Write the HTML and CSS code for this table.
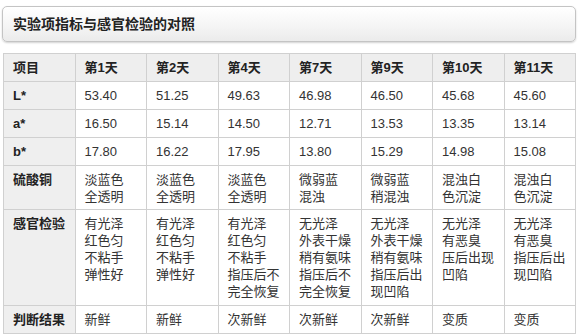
FILE: index.html
```html
<!DOCTYPE html>
<html lang="zh">
<head>
<meta charset="utf-8">
<title>实验项指标与感官检验的对照</title>
<link rel="stylesheet" href="styles.css">
</head>
<body>
<div class="page">
  <div class="title-box">实验项指标与感官检验的对照</div>
  <table class="data">
    <thead>
      <tr><th>项目</th><th>第1天</th><th>第2天</th><th>第4天</th><th>第7天</th><th>第9天</th><th>第10天</th><th>第11天</th></tr>
    </thead>
    <tbody>
      <tr><th>L*</th><td>53.40</td><td>51.25</td><td>49.63</td><td>46.98</td><td>46.50</td><td>45.68</td><td>45.60</td></tr>
      <tr><th>a*</th><td>16.50</td><td>15.14</td><td>14.50</td><td>12.71</td><td>13.53</td><td>13.35</td><td>13.14</td></tr>
      <tr><th>b*</th><td>17.80</td><td>16.22</td><td>17.95</td><td>13.80</td><td>15.29</td><td>14.98</td><td>15.08</td></tr>
      <tr class="tight"><th>硫酸铜</th><td>淡蓝色<br>全透明</td><td>淡蓝色<br>全透明</td><td>淡蓝色<br>全透明</td><td>微弱蓝<br>混浊</td><td>微弱蓝<br>稍混浊</td><td>混浊白<br>色沉淀</td><td>混浊白<br>色沉淀</td></tr>
      <tr><th>感官检验</th><td>有光泽<br>红色匀<br>不粘手<br>弹性好</td><td>有光泽<br>红色匀<br>不粘手<br>弹性好</td><td>有光泽<br>红色匀<br>不粘手<br>指压后不<br>完全恢复</td><td>无光泽<br>外表干燥<br>稍有氨味<br>指压后不<br>完全恢复</td><td>无光泽<br>外表干燥<br>稍有氨味<br>指压后出<br>现凹陷</td><td>无光泽<br>有恶臭<br>压后出现<br>凹陷</td><td>无光泽<br>有恶臭<br>指压后出<br>现凹陷</td></tr>
      <tr><th>判断结果</th><td>新鲜</td><td>新鲜</td><td>次新鲜</td><td>次新鲜</td><td>次新鲜</td><td>变质</td><td>变质</td></tr>
    </tbody>
  </table>
</div>
</body>
</html>
```

FILE: styles.css
```css
html, body {
  margin: 0;
  padding: 0;
  background: #ffffff;
}

body {
  font-family: "Liberation Sans", "Noto Sans CJK SC", sans-serif;
  color: #333333;
}

.page {
  padding: 6px 3px 0 2px;
}

.title-box {
  height: 34px;
  line-height: 34px;
  padding: 0 10px;
  border: 1px solid #c4c4c4;
  border-radius: 5px;
  background: linear-gradient(to bottom, #ffffff 0%, #f6f6f6 50%, #ebebeb 100%);
  box-shadow: 0 1px 2px rgba(0, 0, 0, 0.18);
  font-size: 14px;
  font-weight: bold;
  color: #222222;
}

.data {
  margin: 11px 0 0 1px;
  width: 573px;
  border-collapse: collapse;
  table-layout: fixed;
  font-size: 13px;
  line-height: 17px;
}

.data th,
.data td {
  border: 1px solid #d0d0d0;
  padding: 5px 9px;
  text-align: left;
  vertical-align: top;
  white-space: nowrap;
}

.data .tight th,
.data .tight td {
  padding-bottom: 4px;
}

.data thead th {
  background: #eeeeee;
  font-weight: bold;
  color: #222222;
}

.data tbody th {
  background: #efefef;
  font-weight: bold;
  color: #222222;
}

.data td {
  background: #ffffff;
  color: #333333;
}
```
